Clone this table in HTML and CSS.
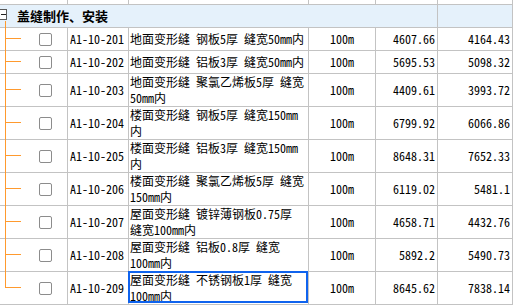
FILE: index.html
```html
<!DOCTYPE html>
<html lang="zh-CN">
<head>
<meta charset="utf-8">
<title>盖缝制作、安装</title>
<link rel="stylesheet" href="styles.css">
</head>
<body>
<div class="grid">
  <div class="c"></div><div class="c"></div><div class="c"></div><div class="c"></div><div class="c"></div><div class="c"></div>

  <div class="c group span"><span class="exp"></span><span class="gline"></span><b class="gtitle">盖缝制作、安装</b></div>
  <div class="c group"></div>

  <div class="c tree"><span class="vl"></span><span class="hl"></span><span class="cb"></span></div>
  <div class="c code">A1-10-201</div>
  <div class="c name">地面变形缝 钢板5厚 缝宽50mm内</div>
  <div class="c unit">100m</div>
  <div class="c num">4607.66</div>
  <div class="c num">4164.43</div>

  <div class="c tree"><span class="vl"></span><span class="hl"></span><span class="cb"></span></div>
  <div class="c code">A1-10-202</div>
  <div class="c name">地面变形缝 铝板3厚 缝宽50mm内</div>
  <div class="c unit">100m</div>
  <div class="c num">5695.53</div>
  <div class="c num">5098.32</div>

  <div class="c tree"><span class="vl"></span><span class="hl"></span><span class="cb"></span></div>
  <div class="c code">A1-10-203</div>
  <div class="c name">地面变形缝 聚氯乙烯板5厚 缝宽50mm内</div>
  <div class="c unit">100m</div>
  <div class="c num">4409.61</div>
  <div class="c num">3993.72</div>

  <div class="c tree"><span class="vl"></span><span class="hl"></span><span class="cb"></span></div>
  <div class="c code">A1-10-204</div>
  <div class="c name">楼面变形缝 钢板5厚 缝宽150mm内</div>
  <div class="c unit">100m</div>
  <div class="c num">6799.92</div>
  <div class="c num">6066.86</div>

  <div class="c tree"><span class="vl"></span><span class="hl"></span><span class="cb"></span></div>
  <div class="c code">A1-10-205</div>
  <div class="c name">楼面变形缝 铝板3厚 缝宽150mm内</div>
  <div class="c unit">100m</div>
  <div class="c num">8648.31</div>
  <div class="c num">7652.33</div>

  <div class="c tree"><span class="vl"></span><span class="hl"></span><span class="cb"></span></div>
  <div class="c code">A1-10-206</div>
  <div class="c name">楼面变形缝 聚氯乙烯板5厚 缝宽150mm内</div>
  <div class="c unit">100m</div>
  <div class="c num">6119.02</div>
  <div class="c num">5481.1</div>

  <div class="c tree"><span class="vl"></span><span class="hl"></span><span class="cb"></span></div>
  <div class="c code">A1-10-207</div>
  <div class="c name">屋面变形缝 镀锌薄钢板0.75厚 缝宽100mm内</div>
  <div class="c unit">100m</div>
  <div class="c num">4658.71</div>
  <div class="c num">4432.76</div>

  <div class="c tree"><span class="vl"></span><span class="hl"></span><span class="cb"></span></div>
  <div class="c code">A1-10-208</div>
  <div class="c name">屋面变形缝 铝板0.8厚 缝宽100mm内</div>
  <div class="c unit">100m</div>
  <div class="c num">5892.2</div>
  <div class="c num">5490.73</div>

  <div class="c tree last"><span class="vl"></span><span class="hl"></span><span class="cb"></span></div>
  <div class="c code">A1-10-209</div>
  <div class="c name sel">屋面变形缝 不锈钢板1厚 缝宽100mm内</div>
  <div class="c unit">100m</div>
  <div class="c num">8645.62</div>
  <div class="c num">7838.14</div>
</div>
</body>
</html>
```

FILE: styles.css
```css
html, body {
  margin: 0;
  background: #fff;
}
body {
  font-family: "Noto Sans Mono CJK SC", "Noto Sans CJK SC", monospace;
  font-size: 12px;
  color: #000;
}
.grid {
  display: grid;
  width: max-content;
  grid-template-columns: 67px 60px 179px 66px 61px 74px;
  grid-template-rows: 4px 22px 22px 22px repeat(7, 32px);
  gap: 1px;
  padding: 0 1px 1px 0;
  background: #c3c3c3;
}
.c {
  background: #fff;
  display: flex;
  align-items: center;
  line-height: 16px;
  min-width: 0;
  position: relative;
}
.group {
  background: #e5f1fb;
}
.span {
  grid-column: 1 / 6;
}
.exp {
  position: absolute;
  left: -4px;
  top: 4px;
  width: 9px;
  height: 9px;
  border: 1px solid #5a5a5a;
  background: #fff;
}
.exp::after {
  content: "";
  position: absolute;
  left: 4px;
  top: 4px;
  width: 5px;
  height: 1px;
  background: #222;
}
.gline {
  position: absolute;
  left: 5px;
  top: 16px;
  bottom: -1px;
  width: 1px;
  background: #ff9a2e;
}
.gtitle {
  padding-left: 17px;
  font-size: 13px;
  font-weight: bold;
  font-family: "Noto Sans CJK SC", sans-serif;
}
.tree {
  padding-left: 39px;
}
.vl {
  position: absolute;
  left: 5px;
  top: 0;
  bottom: -1px;
  width: 1px;
  background: #ff9a2e;
}
.last .vl {
  bottom: calc(50% + 1px);
}
.hl {
  position: absolute;
  left: 5px;
  top: calc(50% - 1px);
  width: 16px;
  height: 1px;
  background: #ff9a2e;
}
.cb {
  width: 11px;
  height: 11px;
  border: 1px solid #8c8c8c;
  border-radius: 2px;
  background: #fff;
}
.code {
  padding-left: 2px;
}
.name {
  padding: 0 3px 0 1px;
}
.unit {
  justify-content: center;
}
.num {
  justify-content: flex-end;
  padding-right: 2px;
}
.sel::after {
  content: "";
  position: absolute;
  left: -1px;
  top: -1px;
  right: 0;
  bottom: 1px;
  border: 2px solid #0f63ee;
}
```
